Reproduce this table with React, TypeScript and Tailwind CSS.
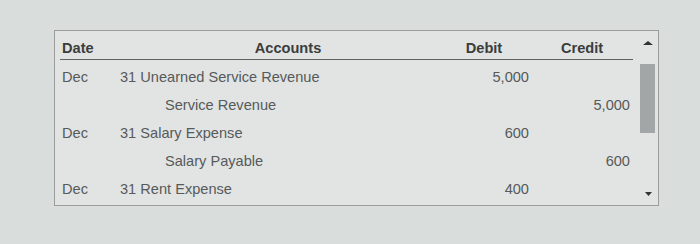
type Entry = {
    date?: string;
    account: string;
    credit?: boolean;
    debit?: string;
    creditAmt?: string;
};

const entries: Entry[] = [
    { date: "Dec", account: "31 Unearned Service Revenue", debit: "5,000" },
    { account: "Service Revenue", credit: true, creditAmt: "5,000" },
    { date: "Dec", account: "31 Salary Expense", debit: "600" },
    { account: "Salary Payable", credit: true, creditAmt: "600" },
    { date: "Dec", account: "31 Rent Expense", debit: "400" },
];

// date | accounts | debit | credit  (573px total)
const cols = "grid grid-cols-[56px_320px_96px_101px]";

function Scrollbar() {
    return (
        <div className="flex flex-1 flex-col items-start pt-[10px]">
            <svg width="10" height="4" viewBox="0 0 10 4" className="ml-[10px]">
                <polygon points="5,0 10,4 0,4" fill="#2f3333" />
            </svg>
            <div className="ml-[7px] mt-[19px] h-[69px] w-[15px] bg-[#a3a6a6]" />
            <div className="flex-1" />
            <svg width="7" height="4" viewBox="0 0 7 4" className="mb-[9px] ml-[12px]">
                <polygon points="0,0 7,0 3.5,4" fill="#2f3333" />
            </svg>
        </div>
    );
}

export default function App() {
    return (
        <div className="h-[244px] w-[700px] bg-[#d9dddc] pl-[54px] pt-[30px] font-['Liberation_Sans',Arial,sans-serif]">
            <div className="flex h-[176px] w-[605px] border border-[#9a9d9c] bg-[#e1e4e3]">
                <div className="ml-[5px] w-[573px] shrink-0">
                    <div className={`${cols} border-b border-[#5e6261] pb-[2px] pt-[8px] text-[14.6px] font-bold leading-[18px] text-[#3b3d3d]`}>
                        <span className="pl-[2px]">Date</span>
                        <span className="pl-[24px] text-center">Accounts</span>
                        <span className="text-center">Debit</span>
                        <span className="pl-[29px]">Credit</span>
                    </div>
                    <div className="pt-[3px] text-[14.6px] leading-[28px] text-[#575a5a]">
                        {entries.map((e, i) => (
                            <div key={i} className={`${cols} h-[28px]`}>
                                <span className="pl-[2px]">{e.date ?? ""}</span>
                                <span className={e.credit ? "pl-[49px]" : "pl-[4px]"}>{e.account}</span>
                                <span className="pr-[3px] text-right">{e.debit ?? ""}</span>
                                <span className="pr-[3px] text-right">{e.creditAmt ?? ""}</span>
                            </div>
                        ))}
                    </div>
                </div>
                <Scrollbar />
            </div>
        </div>
    );
}
